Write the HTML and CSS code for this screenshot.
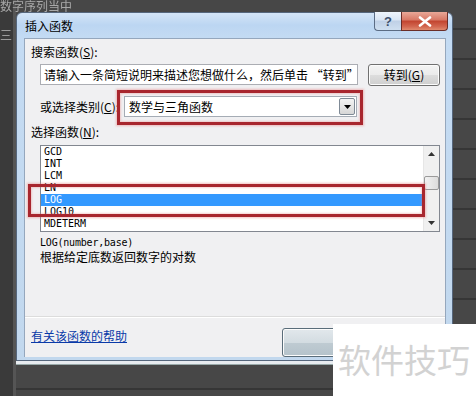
FILE: index.html
```html
<!DOCTYPE html>
<html lang="zh-CN">
<head>
<meta charset="utf-8">
<title>插入函数</title>
<link rel="stylesheet" href="styles.css">
</head>
<body>
<div class="desk">
  <div class="bgtext">数字序列当中</div>
  <div class="bgtext2">三</div>
  <div class="sheetline"></div>
  <div class="dialog">
    <div class="titlebar">
      <span class="title">插入函数</span>
      <div class="caps">
        <span class="cap help">?</span>
        <span class="cap close">
          <svg width="14" height="11" viewBox="0 0 14 11"><path d="M2 1.5 L12 9.5 M12 1.5 L2 9.5" stroke="#fff" stroke-width="2.6" stroke-linecap="round"/></svg>
        </span>
      </div>
    </div>
    <div class="client">
      <div class="lbl">搜索函数(<u>S</u>):</div>
      <div class="searchrow">
        <div class="input">请输入一条简短说明来描述您想做什么，然后单击 “转到”</div>
        <div class="btn go">转到(<u>G</u>)</div>
      </div>
      <div class="catrow">
        <div class="catlbl">或选择类别(<u>C</u>):</div>
        <div class="select">
          <span class="selval">数学与三角函数</span>
          <span class="dd"><svg width="7" height="4" viewBox="0 0 7 4"><path d="M0 0 H7 L3.5 4Z" fill="#000"/></svg></span>
          <div class="mark mark1"></div>
        </div>
      </div>
      <div class="lbl lbl2">选择函数(<u>N</u>):</div>
      <div class="listbox">
        <ul class="items">
          <li>GCD</li>
          <li>INT</li>
          <li>LCM</li>
          <li>LN</li>
          <li class="sel">LOG</li>
          <li>LOG10</li>
          <li>MDETERM</li>
        </ul>
        <div class="scroll">
          <span class="arr"><svg width="7" height="4" viewBox="0 0 7 4"><path d="M0 4 H7 L3.5 0Z" fill="#333"/></svg></span>
          <span class="thumb"></span>
          <span class="arr down"><svg width="7" height="4" viewBox="0 0 7 4"><path d="M0 0 H7 L3.5 4Z" fill="#333"/></svg></span>
        </div>
        <div class="mark mark2"></div>
      </div>
      <div class="syntax">LOG(number,base)</div>
      <div class="desc">根据给定底数返回数字的对数</div>
      <div class="sep"></div>
      <div class="footer">
        <a class="link" href="#">有关该函数的帮助</a>
        <div class="btn ok"></div>
      </div>
    </div>
  </div>
  <div class="watermark">软件技巧</div>
</div>
</body>
</html>
```

FILE: styles.css
```css
* { box-sizing: border-box; margin: 0; padding: 0; }
html, body { width: 476px; height: 396px; overflow: hidden; }
body {
  background: #464646;
  font-family: "Noto Sans CJK SC", "Liberation Sans", sans-serif;
  font-size: 12px;
  color: #000;
}
.desk {
  position: relative;
  width: 476px;
  height: 396px;
  background:
    linear-gradient(90deg, #3a3a3a 0 13px, #555 13px 16px, transparent 16px),
    repeating-linear-gradient(180deg, #474747 0 28px, #363636 28px 30px);
}
.bgtext {
  position: absolute; left: 0; top: -1px;
  color: #a8a8a8; font-size: 12px; line-height: 14px;
  filter: blur(0.5px);
}
.bgtext2 {
  position: absolute; left: 0; top: 28px;
  color: #9a9a9a; font-size: 12px; line-height: 14px; filter: blur(0.5px);
}
.sheetline {
  position: absolute; left: 16px; top: 361px; width: 320px; height: 4px;
  background: #e8ecf0;
  border-bottom: 1px solid #9aa;
}
.dialog {
  position: absolute;
  left: 16px; top: 12px;
  width: 437px; height: 349px;
  border: 1px solid #56677d;
  border-radius: 6px 6px 0 0;
  background: linear-gradient(180deg, #d4e5f7 0, #bcd6f2 12px, #c4dbf3 26px, #c2d8ee 100%);
  padding: 0 6px 6px 7px;
  display: flex;
  flex-direction: column;
}
.titlebar {
  height: 25px;
  display: flex;
  align-items: flex-start;
  flex: none;
}
.title {
  margin-top: 6px;
  margin-left: 1px;
  line-height: 14px;
  color: #000;
}
.caps {
  margin-left: auto;
  margin-right: -2px;
  margin-top: -1px;
  display: flex;
}
.cap {
  height: 19px;
  display: flex;
  align-items: center;
  justify-content: center;
  border: 1px solid #5b6c84;
  border-top: none;
}
.help {
  width: 27px;
  border-radius: 0 0 0 4px;
  border-right: none;
  background: linear-gradient(180deg, #eef4fb 0, #d9e5f3 45%, #bfd0e6 50%, #cfdff0 100%);
  color: #3d4f6a;
  font-family: "Liberation Sans", sans-serif;
  font-weight: bold;
  font-size: 13px;
}
.close {
  width: 47px;
  border-radius: 0 0 4px 0;
  border-color: #6a2e28;
  background: linear-gradient(180deg, #e9a898 0, #d77764 45%, #c2442f 50%, #d2664f 80%, #e08a6e 100%);
}
.client {
  flex: 1;
  background: #f0f0f2;
  border: 1px solid #95a7bd;
  border-bottom: none;
  padding: 6px 0 0 6px;
  display: flex;
  flex-direction: column;
}
.lbl { line-height: 14px; height: 14px; }
u { text-decoration: underline; text-underline-offset: 1px; }
.searchrow {
  display: flex;
  margin-top: 5px;
  margin-left: 9px;
  align-items: flex-start;
}
.input {
  width: 318px; height: 21px;
  background: #fff;
  border: 1px solid #abadb3;
  padding-left: 3px;
  line-height: 19px;
  white-space: nowrap;
  overflow: hidden;
}
.btn {
  height: 22px;
  border: 1px solid #707070;
  border-radius: 3px;
  background: linear-gradient(180deg, #f4f4f4 0, #ebebeb 50%, #dddddd 51%, #cfcfcf 100%);
  box-shadow: inset 0 0 0 1px #fcfcfc;
  display: flex; align-items: center; justify-content: center;
  line-height: 14px;
}
.go { width: 72px; margin-left: 10px; }
.catrow {
  display: flex;
  margin-top: 10px;
  margin-left: 9px;
  align-items: center;
}
.catlbl { width: 84px; line-height: 14px; }
.select {
  position: relative;
  width: 233px; height: 21px;
  background: #fff;
  border: 1px solid #a5acb5;
  display: flex; align-items: center;
  padding-left: 4px;
}
.selval { line-height: 14px; }
.dd {
  position: absolute; right: 1px; top: 1px;
  width: 16px; height: 17px;
  border: 1px solid #7f8a96;
  border-radius: 2px;
  background: linear-gradient(180deg, #f3f3f3 0, #e6e6e6 50%, #d6d6d6 100%);
  display: flex; align-items: center; justify-content: center;
}
.mark {
  position: absolute;
  border: 3px solid #a8262e;
  box-shadow: 0 0 2px 1px rgba(230,120,120,0.45), inset 0 0 2px 1px rgba(230,120,120,0.35);
}
.mark1 { left: -8px; top: -7px; width: 246px; height: 35px; }
.lbl2 { margin-top: 8px; }
.listbox {
  position: relative;
  margin-top: 6px;
  margin-left: 9px;
  width: 400px; height: 87px;
  background: #fff;
  border: 1px solid #828790;
  display: flex;
}
.items {
  list-style: none;
  flex: 1;
  overflow: hidden;
}
.items li {
  height: 12px;
  line-height: 12px;
  padding-left: 3px;
  font-family: "DejaVu Sans Mono", "Liberation Mono", monospace;
  font-size: 10px;
  color: #000;
}
.items li.sel { background: #3399ff; color: #fff; }
.scroll {
  width: 16px;
  background: #f0f0f0;
  border-left: 1px solid #e6e6e6;
  display: flex; flex-direction: column; align-items: center;
  position: relative;
}
.arr { height: 16px; display: flex; align-items: center; justify-content: center; }
.arr.down { position: absolute; bottom: 0; }
.thumb {
  margin-top: 14px;
  width: 15px; height: 14px;
  border: 1px solid #9a9a9a;
  border-radius: 2px;
  background: linear-gradient(90deg, #f2f2f2, #dcdcdc);
}
.mark2 { left: -13px; top: 38px; width: 397px; height: 33px; }
.syntax {
  margin-top: 5px;
  margin-left: 9px;
  font-family: "DejaVu Sans Mono", "Liberation Mono", monospace;
  font-size: 10px;
  line-height: 12px;
  letter-spacing: -0.2px;
}
.desc { margin-left: 9px; margin-top: 1px; line-height: 14px; }
.sep {
  margin-top: 52px;
  margin-left: -6px;
  height: 2px;
  border-top: 1px solid #dcdcdc;
  border-bottom: 1px solid #fff;
}
.footer {
  display: flex;
  align-items: flex-start;
  margin-top: 10px;
}
.link {
  color: #0a3aa8;
  text-decoration: underline;
  line-height: 14px;
  margin-top: 1px;
}
.ok {
  margin-left: auto;
  margin-right: 88px;
  width: 75px; height: 29px;
  border-color: #5a6d7a;
  background: linear-gradient(180deg, #e2e8ec 0, #d3dce1 50%, #bfcbd2 51%, #b4c2ca 100%);
}
.watermark {
  position: absolute;
  left: 333px; top: 324px;
  width: 143px; height: 72px;
  background: #fff;
  color: #d2d2d2;
  font-size: 33px;
  line-height: 33px;
  padding: 19px 0 0 5px;
  white-space: nowrap;
}
```
